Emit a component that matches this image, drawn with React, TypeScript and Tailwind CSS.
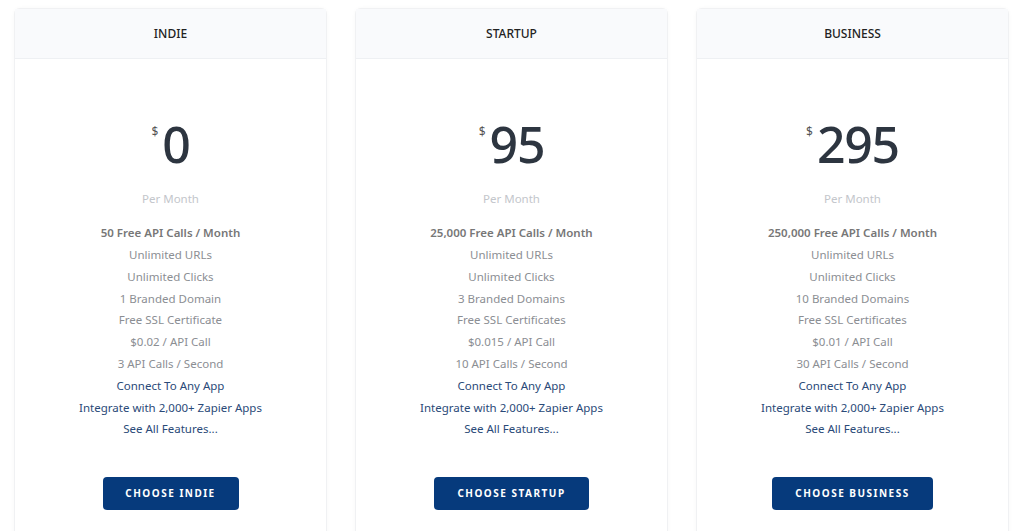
const plans = [
  {
    name: "INDIE",
    price: "0",
    features: ["50 Free API Calls / Month", "Unlimited URLs", "Unlimited Clicks", "1 Branded Domain", "Free SSL Certificate", "$0.02 / API Call", "3 API Calls / Second"],
    btn: "w-[136px]",
  },
  {
    name: "STARTUP",
    price: "95",
    features: ["25,000 Free API Calls / Month", "Unlimited URLs", "Unlimited Clicks", "3 Branded Domains", "Free SSL Certificates", "$0.015 / API Call", "10 API Calls / Second"],
    btn: "w-[155px]",
  },
  {
    name: "BUSINESS",
    price: "295",
    features: ["250,000 Free API Calls / Month", "Unlimited URLs", "Unlimited Clicks", "10 Branded Domains", "Free SSL Certificates", "$0.01 / API Call", "30 API Calls / Second"],
    btn: "w-[161px]",
  },
];

const links = ["Connect To Any App", "Integrate with 2,000+ Zapier Apps", "See All Features..."];

export default function App() {
  return (
    <div className="w-[1024px] h-[531px] overflow-hidden bg-white font-['Open_Sans',sans-serif]">
      <div className="flex gap-[28px] pl-[14px] pt-[8px]">
        {plans.map((p) => (
          <div key={p.name} className="w-[313px] h-[540px] rounded-md border border-[#f0f1f3] bg-white shadow-[0_0_4px_rgba(0,0,0,0.03)]">
            <div className="h-[50px] flex items-center justify-center bg-[#f9fafc] border-b border-[#eef0f3] text-[12px] font-medium text-[#222]">
              {p.name}
            </div>
            <div className="flex flex-col items-center">
              <div className="mt-[50px] h-[70px] flex items-start text-[#2d3540]">
                <span className="text-[12px] mt-[14px] mr-[4px] text-[#555]">$</span>
                <span className="text-[50px] leading-[70px] font-['Roboto',sans-serif] font-medium tracking-tight">{p.price}</span>
              </div>
              <div className="mt-[11px] text-[11.5px] text-[#c3c6cb]">Per Month</div>
              <div className="mt-[15px] flex flex-col items-center text-[11.5px] leading-[21.8px]">
                {p.features.map((f, i) => (
                  <div key={f} className={i === 0 ? "font-semibold text-[#777]" : "text-[#8b8e93]"}>{f}</div>
                ))}
                {links.map((l) => (
                  <div key={l} className="text-[#2a4a78]">{l}</div>
                ))}
              </div>
              <button className={`${p.btn} mt-[37px] h-[33px] rounded-sm bg-[#063a7c] text-white text-[10px] font-bold tracking-[1.5px]`}>
                CHOOSE {p.name}
              </button>
            </div>
          </div>
        ))}
      </div>
    </div>
  );
}
